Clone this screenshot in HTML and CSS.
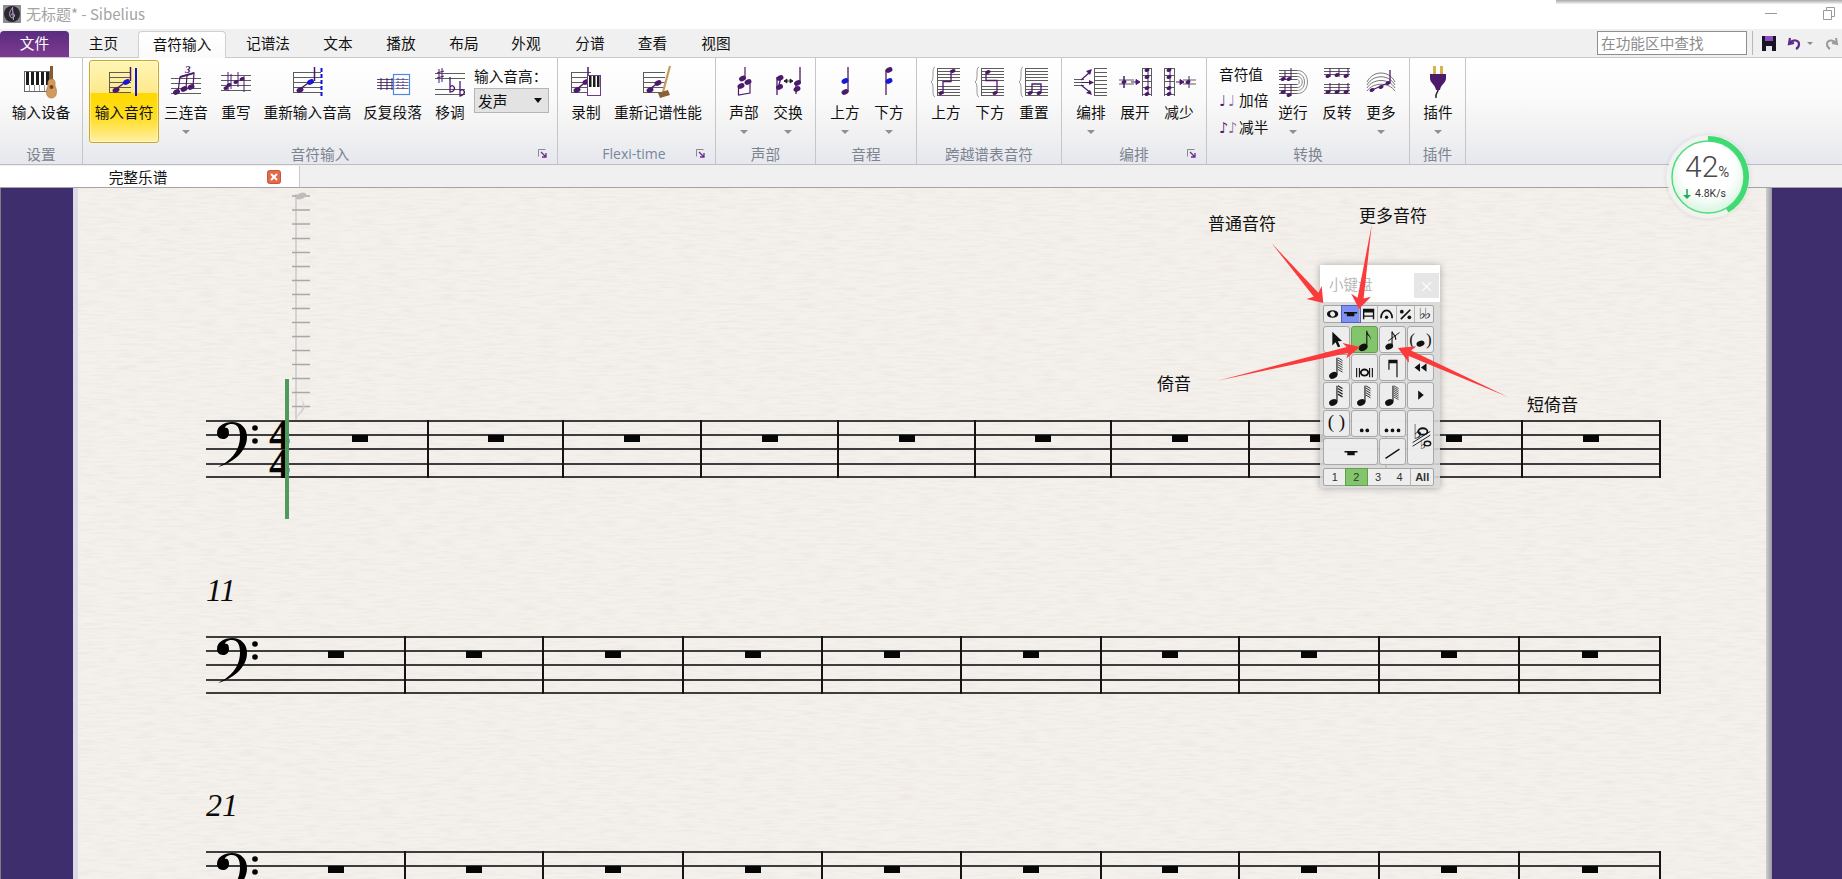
FILE: index.html
```html
<!DOCTYPE html>
<html lang="zh-CN">
<head>
    <meta charset="UTF-8">
    <title>无标题* - Sibelius</title>
    <link rel="stylesheet" href="styles.css">
</head>
<body>
<!-- shared glyphs -->
<svg class="defs" width="0" height="0">
    <defs>
        <ellipse id="h" rx="3.6" ry="2.6" transform="rotate(-25)"/>
        <ellipse id="s" rx="2.6" ry="1.8" transform="rotate(-25)"/>
        <g id="clef">
            <path d="M1 46C13 40 23 31 23 15C23 7 20 3 15 3C11 3 8 5 8 7C11 6 12 9 12 12C12 16 9 18 6 18C2 18 0 15 0 12C0 5 7 1 15 1C24 1 30 7 30 16C30 31 15 42 1 46Z"/>
            <circle cx="38" cy="7" r="2.800"/>
            <circle cx="38" cy="20" r="2.800"/>
        </g>
        <filter id="paper-grain" x="0" y="0" width="100%" height="100%">
            <feTurbulence type="fractalNoise" baseFrequency="0.05 0.45" numOctaves="2" seed="4"/>
            <feColorMatrix values="0 0 0 0 0.70  0 0 0 0 0.64  0 0 0 0 0.60  0.55 0 0 0 -0.22"/>
        </filter>
        <radialGradient id="ball" cx="50%" cy="40%" r="60%">
            <stop offset="60%" stop-color="#fff"/>
            <stop offset="100%" stop-color="#d8f5e1"/>
        </radialGradient>
    </defs>
</svg>

<div class="stage">
    <div class="titlebar">
        <div class="app-title">
            <svg class="app-icon" width="18" height="18" viewBox="0 0 18 18"><rect width="18" height="18" fill="#8d8a90"/><circle cx="9" cy="9" r="8" fill="#2b2730"/><path d="M10 2C7 6 6 8 7 11C8 14 12 13 11.500 10C11 8 8 8.500 8 10.500M9.500 3L10.500 15" fill="none" stroke="#b9a8c9" stroke-width="1"/></svg>
            <span>无标题* - Sibelius</span>
        </div>
        <div class="win-btns">
            <span class="win-min"></span>
            <svg width="12" height="13" viewBox="0 0 12 13"><path d="M.5 3.500h8v9h-8zM3.500 3.500v-3h8v9h-3" fill="none" stroke="#9a9a9a"/></svg>
        </div>
    </div>

    <div class="tabrow">
        <div class="tab tab-file">文件</div>
        <div class="tab w69">主页</div>
        <div class="tab tab-on">音符输入</div>
        <div class="tab w84">记谱法</div>
        <div class="tab w56">文本</div>
        <div class="tab w70">播放</div>
        <div class="tab w56">布局</div>
        <div class="tab w68">外观</div>
        <div class="tab w60">分谱</div>
        <div class="tab w65">查看</div>
        <div class="tab w62">视图</div>
        <div class="search">在功能区中查找</div>
        <div class="quick">
            <svg width="14" height="15" viewBox="0 0 14 15"><path d="M0 0h14v15H0z" fill="#1a1326"/><path d="M3 0h8v5H3z" fill="#8a4fc0"/><path d="M4 10h6v5H4z" fill="#e8e8e8"/></svg>
            <svg class="q-undo" width="14" height="14" viewBox="0 0 14 14"><path d="M3 2L2 8L7 7M3 7C6 3 12 4 12 8C12 10 11 12 9 13" fill="none" stroke="#5b2c8a" stroke-width="2.200"/></svg>
            <i class="q-caret"></i>
            <svg class="q-redo" width="14" height="14" viewBox="0 0 14 14"><path d="M11 2L12 8L7 7M11 7C8 3 2 4 2 8C2 10 3 12 5 13" fill="none" stroke="#9a9a9a" stroke-width="2"/></svg>
        </div>
    </div>

    <div class="ribbon">
        <!-- 设置 -->
        <section class="group g-setup">
            <div class="items">
                <div class="item w82">
                    <svg class="ico" viewBox="0 0 40 36"><rect x="3.500" y="7.500" width="25" height="20" fill="#fff" stroke="#666"/><path d="M5 8h3v13H5zM10 8h3v13h-3zM15 8h3v13h-3zM20 8h3v13h-3zM25 8h3v13h-3z" fill="#1d1d1d"/><path d="M8.500 21v6M13.500 21v6M18.500 21v6M23.500 21v6" stroke="#999"/><path d="M29 2h3v15h-3z" fill="#8a5a2b"/><path d="M30.500 15C26 15 27 20 27 22C25 25 24 34 30.500 34C37 34 36 25 34 22C34 20 35 15 30.500 15Z" fill="#d49a5c" stroke="#a56c34" stroke-width=".6"/><circle cx="30.500" cy="23" r="2" fill="#6d4520"/></svg>
                    <span>输入设备</span>
                </div>
            </div>
            <div class="glabel">设置</div>
        </section>

        <!-- 音符输入 -->
        <section class="group g-input">
            <div class="items">
                <div class="item item-on w70">
                    <svg class="ico" viewBox="0 0 40 36"><path class="sl" d="M5.500 8v20M5 8.500h22M5 13.500h22M5 18.500h22M5 23.500h22M5 28.500h22"/><path d="M12 25L23 17M26.500 3V17" stroke="#4b1a6b" stroke-width="1.500" fill="none"/><use href="#h" x="12" y="26" class="p"/><use href="#h" x="22.500" y="18" class="b"/><path d="M31 4h2v28h-2z" fill="#1313d8"/></svg>
                    <span>输入音符</span>
                </div>
                <div class="item w54">
                    <svg class="ico" viewBox="0 0 40 36"><path class="sl" d="M5 14.500h30M5 19.500h30M5 24.500h30M5 29.500h30"/><path d="M12 28L14 13L28 9L27 23M21 11L20 25" stroke="#4b1a6b" stroke-width="1.200" fill="none"/><path d="M14 12L28 8V10L14 14Z" class="p"/><use href="#h" x="10.500" y="28" class="p"/><use href="#h" x="18" y="25" class="p"/><use href="#h" x="25" y="23" class="p"/><text x="19" y="9" class="tup">3</text></svg>
                    <span>三连音</span>
                    <i class="caret"></i>
                </div>
                <div class="item w46">
                    <svg class="ico" viewBox="0 0 40 36"><path class="sl" d="M5 11.500h30M5 16.500h30M5 21.500h30M5 26.500h30"/><path d="M12 8V27M15 10V25M22 8V23M28 12V28" stroke="#4b1a6b" fill="none"/><use href="#s" x="10" y="24" class="p"/><use href="#s" x="13" y="21" class="p"/><use href="#s" x="20" y="18" class="p"/><use href="#s" x="26" y="15" class="p"/></svg>
                    <span>重写</span>
                </div>
                <div class="item w97">
                    <svg class="ico" viewBox="0 0 40 36"><path class="sl" d="M5.500 8v20M5 8.500h28M5 13.500h28M5 18.500h28M5 23.500h28M5 28.500h28"/><path d="M12 25L23 17M26.500 3V17" stroke="#4b1a6b" stroke-width="1.500" fill="none"/><use href="#h" x="12" y="26" class="p"/><use href="#h" x="22.500" y="18" class="b"/><path d="M33.500 4v28" stroke="#1313d8" stroke-width="2" stroke-dasharray="4 2"/></svg>
                    <span>重新输入音高</span>
                </div>
                <div class="item w73">
                    <svg class="ico" viewBox="0 0 40 36"><path d="M4 15.500h32M4 18.500h32M4 21.500h32M4 24.500h32" stroke="#5a4a6a" fill="none"/><path d="M8 14v12M14 14v12M19 14v12" stroke="#4b1a6b" fill="none"/><rect x="20.500" y="10.500" width="16" height="20" fill="#fff" fill-opacity=".55" stroke="#4a8bea" stroke-width="1.200"/><path d="M23 15.500h12M23 18.500h12M23 21.500h12M23 24.500h12" stroke="#7a6a8a" fill="none"/><path d="M25 14v11M30 14v11" stroke="#4040c0" stroke-dasharray="2 1"/></svg>
                    <span>反复段落</span>
                </div>
                <div class="item w42">
                    <svg class="ico" viewBox="0 0 40 36"><path class="sl" d="M5 9.500h30M5 14.500h30M5 25.500h30M5 30.500h30"/><path d="M9 5V19M12 4V18M7 9L14 7M7 14L14 12" stroke="#4b1a6b" fill="none"/><path d="M20 13V28C24 28 26 24 23 22C22 21 21 22 20 23M30 17V32C34 31 36 28 33 26C32 25 31 26 30 27" stroke="#4b1a6b" fill="none" stroke-width="1.300"/></svg>
                    <span>移调</span>
                </div>
                <div class="pitch">
                    <div class="pitch-title">输入音高：</div>
                    <div class="dropdown"><span>发声</span><i></i></div>
                </div>
            </div>
            <div class="glabel">音符输入</div>
            <svg class="launch" width="9" height="9" viewBox="0 0 9 9"><path d="M.5.500h7M.5.500v7" stroke="#8a8a8a" fill="none"/><path d="M3 3l5 5M8 4v4H4" stroke="#6a2a90" fill="none" stroke-width="1.300"/></svg>
        </section>

        <!-- Flexi-time -->
        <section class="group g-flexi">
            <div class="items">
                <div class="item w56">
                    <svg class="ico" viewBox="0 0 40 36"><path class="sl" d="M5.500 8v20M5 8.500h20M5 13.500h20M5 18.500h20M5 23.500h20M5 28.500h20"/><path d="M11 25L21 17M22 3V16" stroke="#4b1a6b" stroke-width="1.500" fill="none"/><use href="#h" x="11" y="26" class="p"/><use href="#h" x="20" y="18" class="p"/><rect x="21.500" y="11.500" width="13" height="20" fill="#fff" stroke="#6a3a90"/><path d="M23 12h2.500v11H23zM27 12h2.500v11H27zM31 12h2.500v11H31z" fill="#1d1d1d"/></svg>
                    <span>录制</span>
                </div>
                <div class="item w88">
                    <svg class="ico" viewBox="0 0 40 36"><path class="sl" d="M5.500 8v20M5 8.500h22M5 13.500h22M5 18.500h22M5 23.500h22M5 28.500h22"/><path d="M12 25L21 18" stroke="#4b1a6b" stroke-width="1.500" fill="none"/><use href="#h" x="12" y="26" class="p"/><use href="#h" x="20" y="19" class="p"/><path d="M32 2L25 28" stroke="#c89a60" stroke-width="2.200"/><path d="M20 29L30 26L32 31L22 34Z" fill="#8a6238"/></svg>
                    <span>重新记谱性能</span>
                </div>
            </div>
            <div class="glabel gl-flexi">Flexi-time</div>
            <svg class="launch" width="9" height="9" viewBox="0 0 9 9"><path d="M.5.500h7M.5.500v7" stroke="#8a8a8a" fill="none"/><path d="M3 3l5 5M8 4v4H4" stroke="#6a2a90" fill="none" stroke-width="1.300"/></svg>
        </section>

        <!-- 声部 -->
        <section class="group g-voice">
            <div class="items">
                <div class="item w44">
                    <svg class="ico" viewBox="0 0 40 36"><path d="M21 3V14M14.500 21V31L26 29V16" stroke="#4b1a6b" stroke-width="1.200" fill="none"/><use href="#h" x="18.500" y="14.500" class="p"/><use href="#h" x="24" y="18" class="p"/><use href="#h" x="17" y="22" class="p"/></svg>
                    <span>声部</span>
                    <i class="caret"></i>
                </div>
                <div class="item w44">
                    <svg class="ico" viewBox="0 0 40 36"><path d="M9 13V31M32 3V19M13 13L10 25M28 19V30" stroke="#4b1a6b" stroke-width="1.300" fill="none"/><path d="M16 17h9M16 17l3-2v4zM25 17l-3-2v4z" stroke="#222" fill="#222" stroke-width=".8"/><use href="#h" x="11.500" y="23" class="p"/><use href="#h" x="12" y="14" class="p"/><use href="#h" x="29.500" y="19" class="p"/><use href="#h" x="29" y="25" class="p"/></svg>
                    <span>交换</span>
                    <i class="caret"></i>
                </div>
            </div>
            <div class="glabel">声部</div>
        </section>

        <!-- 音程 -->
        <section class="group g-int">
            <div class="items">
                <div class="item w44">
                    <svg class="ico" viewBox="0 0 40 36"><path d="M23 3V28" stroke="#4b1a6b" stroke-width="1.300"/><use href="#h" x="20" y="17" class="b"/><use href="#h" x="20" y="28" class="p"/></svg>
                    <span>上方</span>
                    <i class="caret"></i>
                </div>
                <div class="item w44">
                    <svg class="ico" viewBox="0 0 40 36"><path d="M17 6V31" stroke="#4b1a6b" stroke-width="1.300"/><use href="#h" x="20" y="6" class="p"/><use href="#h" x="20" y="17" class="b"/></svg>
                    <span>下方</span>
                    <i class="caret"></i>
                </div>
            </div>
            <div class="glabel">音程</div>
        </section>

        <!-- 跨越谱表音符 -->
        <section class="group g-cross">
            <div class="items">
                <div class="item w44">
                    <svg class="ico" viewBox="0 0 40 36"><path class="brace" d="M9 3C5 4 9 16 5 18C9 20 5 32 9 33"/><path class="sl" d="M11 4.500h23M11 7.500h23M11 10.500h23M11 13.500h23M11 16.500h23M11 22.500h23M11 25.500h23M11 28.500h23M11 31.500h23M11.500 4v28"/><path d="M17 30V17.500H25V6" stroke="#4b1a6b" stroke-width="1.300" fill="none"/><use href="#s" x="15" y="29" class="p"/><use href="#s" x="27" y="7" class="p"/></svg>
                    <span>上方</span>
                </div>
                <div class="item w44">
                    <svg class="ico" viewBox="0 0 40 36"><path class="brace" d="M9 3C5 4 9 16 5 18C9 20 5 32 9 33"/><path class="sl" d="M11 4.500h23M11 7.500h23M11 10.500h23M11 13.500h23M11 16.500h23M11 22.500h23M11 25.500h23M11 28.500h23M11 31.500h23M11.500 4v28"/><path d="M16 8V16.500H27V29" stroke="#4b1a6b" stroke-width="1.300" fill="none"/><use href="#s" x="18" y="8" class="p"/><use href="#s" x="25" y="29" class="p"/></svg>
                    <span>下方</span>
                </div>
                <div class="item w44">
                    <svg class="ico" viewBox="0 0 40 36"><path class="brace" d="M9 3C5 4 9 16 5 18C9 20 5 32 9 33"/><path class="sl" d="M11 4.500h23M11 7.500h23M11 10.500h23M11 13.500h23M11 16.500h23M11 22.500h23M11 25.500h23M11 28.500h23M11 31.500h23M11.500 4v28"/><path d="M18 29V20H27V29" stroke="#4b1a6b" stroke-width="1.300" fill="none"/><use href="#s" x="16" y="29" class="p"/><use href="#s" x="25" y="29" class="p"/></svg>
                    <span>重置</span>
                </div>
            </div>
            <div class="glabel">跨越谱表音符</div>
        </section>

        <!-- 编排 -->
        <section class="group g-arr">
            <div class="items">
                <div class="item w44">
                    <svg class="ico" viewBox="0 0 40 36"><path class="sl" d="M3 15.500h10M3 18.500h10M3 21.500h10M23 4.500h13M23 8.500h13M23 12.500h13M23 16.500h13M23 20.500h13M23 24.500h13M23 28.500h13M23 31.500h13M23.500 4v28"/><path d="M10 16L19 8M10 18.500H21M10 21L20 29" stroke="#4b1a6b" stroke-width="1.200" fill="none"/><path d="M21 5L15 7L19 11ZM23 18.500L18 16V21ZM21 31L15 29L19 26Z" fill="#4b1a6b"/></svg>
                    <span>编排</span>
                    <i class="caret"></i>
                </div>
                <div class="item w44">
                    <svg class="ico" viewBox="0 0 40 36"><path class="sl" d="M27.500 4v28M36.500 4v28M27 4.500h10M27 11.500h10M27 17.500h10M27 23.500h10M27 30.500h10M4 16h15M4 20h15"/><path d="M9 12V24" stroke="#4b1a6b" stroke-width="1.500"/><use href="#s" x="9" y="18" class="p"/><path d="M16 18h7M25 18l-4-2.500v5z" stroke="#4b1a6b" fill="#4b1a6b"/><use href="#s" x="32" y="6" class="p"/><use href="#s" x="32" y="13" class="p"/><use href="#s" x="32" y="24" class="p"/><use href="#s" x="32" y="30" class="p"/><path d="M33 4v27" stroke="#4b1a6b"/></svg>
                    <span>展开</span>
                </div>
                <div class="item w44">
                    <svg class="ico" viewBox="0 0 40 36"><path class="sl" d="M5.500 4v28M15.500 4v28M5 4.500h11M5 11.500h11M5 17.500h11M5 23.500h11M5 30.500h11M24 16h13M24 20h13"/><use href="#s" x="10" y="6" class="p"/><use href="#s" x="10" y="13" class="p"/><use href="#s" x="10" y="24" class="p"/><use href="#s" x="10" y="30" class="p"/><path d="M11 4v27M30 12V24" stroke="#4b1a6b"/><path d="M17 18h6M25 18l-4-2.500v5z" stroke="#4b1a6b" fill="#4b1a6b"/><use href="#s" x="29" y="18" class="p"/></svg>
                    <span>减少</span>
                </div>
            </div>
            <div class="glabel">编排</div>
            <svg class="launch" width="9" height="9" viewBox="0 0 9 9"><path d="M.5.500h7M.5.500v7" stroke="#8a8a8a" fill="none"/><path d="M3 3l5 5M8 4v4H4" stroke="#6a2a90" fill="none" stroke-width="1.300"/></svg>
        </section>

        <!-- 转换 -->
        <section class="group g-trans">
            <div class="items">
                <div class="stack">
                    <div class="st-title">音符值</div>
                    <div class="st-row"><b class="n1">♩</b><b class="n2">♩</b>加倍</div>
                    <div class="st-row"><b class="n1">♪</b><b class="n2">♪</b>减半</div>
                </div>
                <div class="item w44">
                    <svg class="ico" viewBox="0 0 40 36"><path class="sl" d="M6 6.500h18M6 9.500h18M6 12.500h18M6 15.500h18M6 20.500h18M6 23.500h18M6 26.500h18M6 29.500h18"/><path d="M24 6.500C38 6 38 30 24 29.500M24 9.500C34 9 34 27 24 26.500M24 12.500C31 12 31 24 24 23.500M24 15.500C27 15 27 21 24 20.500" stroke="#888" fill="none"/><path d="M12 7V16M18 4V16M12 20V29M18 20V32" stroke="#4b1a6b" fill="none"/><use href="#s" x="10" y="15" class="p"/><use href="#s" x="16" y="15" class="p"/><use href="#s" x="10" y="28" class="p"/><use href="#s" x="16" y="31" class="p"/></svg>
                    <span>逆行</span>
                    <i class="caret"></i>
                </div>
                <div class="item w44">
                    <svg class="ico" viewBox="0 0 40 36"><path class="sl" d="M7 4.500h26M7 7.500h26M7 10.500h26M7 20.500h26M7 23.500h26M7 26.500h26M7 29.500h26"/><path d="M13 4V13M22 4V13M31 4V13M13 19V28M22 19V28M31 19V28" stroke="#4b1a6b" fill="none"/><use href="#s" x="11" y="12" class="p"/><use href="#s" x="20" y="11" class="p"/><use href="#s" x="29" y="12" class="p"/><use href="#s" x="11" y="28" class="p"/><use href="#s" x="20" y="28" class="p"/><use href="#s" x="29" y="28" class="p"/></svg>
                    <span>反转</span>
                </div>
                <div class="item w44">
                    <svg class="ico" viewBox="0 0 40 36"><path d="M6 18C12 6 28 6 34 18M6 21C12 10 28 10 34 21M6 24C12 14 28 14 34 24M6 27C12 18 28 18 34 27" stroke="#777" fill="none"/><path d="M11 26L27 19M29 6V19" stroke="#4b1a6b" stroke-width="1.300" fill="none"/><use href="#s" x="11" y="26" class="p"/><use href="#s" x="20" y="23" class="p"/><use href="#s" x="27" y="19" class="p"/></svg>
                    <span>更多</span>
                    <i class="caret"></i>
                </div>
            </div>
            <div class="glabel">转换</div>
        </section>

        <!-- 插件 -->
        <section class="group g-plug">
            <div class="items">
                <div class="item w56">
                    <svg class="ico" viewBox="0 0 40 36"><path d="M15 2h3v9h-3zM22 2h3v9h-3z" fill="#d9b24a"/><path d="M12 10H28V14C28 19 23 20 22 26H18C17 20 12 19 12 14Z" fill="#4b1a6b"/><path d="M20 26C20 29 17 29 18 34" stroke="#222" stroke-width="1.500" fill="none"/></svg>
                    <span>插件</span>
                    <i class="caret"></i>
                </div>
            </div>
            <div class="glabel">插件</div>
        </section>
    </div>

    <div class="doctabs">
        <div class="doctab">
            <span>完整乐谱</span>
            <svg width="14" height="14" viewBox="0 0 14 14"><rect x=".5" y=".5" width="13" height="13" rx="2" fill="#e4694a" stroke="#c9553a"/><path d="M4 4l6 6M10 4l-6 6" stroke="#fff" stroke-width="2"/></svg>
        </div>
    </div>

    <div class="canvas">
        <div class="paper">
            <svg class="grain" width="1688" height="691"><rect width="1688" height="691" filter="url(#paper-grain)"/></svg>

            <div class="staff sys-a">
                <svg class="clef" width="46" height="48" viewBox="0 0 46 48"><use href="#clef"/></svg>
                <div class="timesig"><span>4</span><span>4</span></div>
                <div class="bar first-a"><i class="rest"></i></div>
                <div class="bar"><i class="rest"></i></div>
                <div class="bar"><i class="rest"></i></div>
                <div class="bar"><i class="rest"></i></div>
                <div class="bar"><i class="rest"></i></div>
                <div class="bar"><i class="rest"></i></div>
                <div class="bar"><i class="rest"></i></div>
                <div class="bar"><i class="rest"></i></div>
                <div class="bar"><i class="rest"></i></div>
                <div class="bar"><i class="rest"></i></div>
            </div>

            <div class="barnum">11</div>
            <div class="staff sys-b">
                <svg class="clef" width="46" height="48" viewBox="0 0 46 48"><use href="#clef"/></svg>
                <div class="bar first-b"><i class="rest"></i></div>
                <div class="bar"><i class="rest"></i></div>
                <div class="bar"><i class="rest"></i></div>
                <div class="bar"><i class="rest"></i></div>
                <div class="bar"><i class="rest"></i></div>
                <div class="bar"><i class="rest"></i></div>
                <div class="bar"><i class="rest"></i></div>
                <div class="bar"><i class="rest"></i></div>
                <div class="bar"><i class="rest"></i></div>
                <div class="bar"><i class="rest"></i></div>
            </div>

            <div class="barnum num-last">21</div>
            <div class="staff sys-b">
                <svg class="clef" width="46" height="48" viewBox="0 0 46 48"><use href="#clef"/></svg>
                <div class="bar first-b"><i class="rest"></i></div>
                <div class="bar"><i class="rest"></i></div>
                <div class="bar"><i class="rest"></i></div>
                <div class="bar"><i class="rest"></i></div>
                <div class="bar"><i class="rest"></i></div>
                <div class="bar"><i class="rest"></i></div>
                <div class="bar"><i class="rest"></i></div>
                <div class="bar"><i class="rest"></i></div>
                <div class="bar"><i class="rest"></i></div>
                <div class="bar"><i class="rest"></i></div>
            </div>
        </div>
        <div class="paper-edge"></div>
    </div>

    <!-- caret and pitch ruler on the first staff -->
    <div class="ins-caret"></div>
    <svg class="ruler" width="24" height="234" viewBox="0 0 24 234">
        <path d="M6 4V230" stroke="#c4c4c4" stroke-width="1.300"/>
        <path d="M2 6h18M2 20h18M2 34h18M2 48.500h18M2 62.500h18M2 76.500h18M2 90.500h18M2 104.500h18M2 118.500h18M2 132.500h18M2 146.500h18M2 160.500h18M2 174.500h18M2 188.500h18M2 202.500h18M2 216.500h18" stroke="#a8a8a8" stroke-width="1.300"/>
        <ellipse cx="11" cy="6" rx="5.500" ry="3" fill="#bdbdbd" transform="rotate(-20 11 6)"/>
        <path d="M6 229C8 222 14 220 13 214C12 211 12 210 11 209C15 213 17 219 10 224Z" fill="#d0d0d0"/>
    </svg>

    <!-- 小键盘 -->
    <div class="keypad">
        <div class="kp-title"><span>小键盘</span><b>×</b></div>
        <div class="kp-tabs">
            <div class="kc"><svg viewBox="0 0 18 17"><ellipse cx="9" cy="8.500" rx="6" ry="4"/><ellipse cx="9" cy="8.500" rx="2.500" ry="2.800" fill="#eee" transform="rotate(-30 9 8.500)"/></svg></div>
            <div class="kc kc-blue"><svg viewBox="0 0 18 17"><path d="M2 6.500h14v1.500H2zM5 8h8v3H5z"/></svg></div>
            <div class="kc"><svg viewBox="0 0 18 17"><path d="M3 3h12v4H3zM3 10h12v1.500H3zM3 3h1.500v11H3zM13.500 3H15v11h-1.500z"/></svg></div>
            <div class="kc"><svg viewBox="0 0 18 17"><path d="M3 13C3 2 15 2 15 13" fill="none" stroke="#111" stroke-width="1.800"/><circle cx="9" cy="12" r="1.800"/></svg></div>
            <div class="kc"><svg viewBox="0 0 18 17"><path d="M4 14L14 4" stroke="#111" stroke-width="1.800"/><circle cx="5" cy="6" r="2"/><circle cx="13" cy="12" r="2"/></svg></div>
            <div class="kc kc-flat">♭♭</div>
        </div>
        <div class="kp-grid">
            <div class="kb"><svg viewBox="0 0 27 27"><path d="M9 5L9 20L12.500 16.500L15 22L17.500 21L15 15.500L19.500 15Z"/></svg></div>
            <div class="kb kb-on"><svg viewBox="0 0 27 27"><use href="#h" transform="translate(12 22) scale(1.400)"/><path d="M16 4V21" stroke="#111" stroke-width="1.200"/><path d="M16 4C16.500 8 21.500 9 20 15C20.500 11 18 9 16 8Z"/></svg></div>
            <div class="kb"><svg viewBox="0 0 27 27"><use href="#h" transform="translate(10 21) scale(1.200)"/><path d="M13 5V20" stroke="#111" stroke-width="1.200"/><path d="M13 5C14 9 18 9 17 14" fill="none" stroke="#111" stroke-width="1.200"/><path d="M9 15L21 6" stroke="#111"/></svg></div>
            <div class="kb kb-paren"><span>(</span><svg viewBox="0 0 12 27"><ellipse cx="6" cy="18" rx="4.500" ry="3" transform="rotate(-20 6 18)"/></svg><span>)</span></div>

            <div class="kb"><svg viewBox="0 0 27 27"><use href="#h" transform="translate(10 22) scale(1.300)"/><path d="M14 3V21" stroke="#111" stroke-width="1.200"/><path d="M15 3l5 3M15 5.500l5 3M15 8l5 3M15 10.500l5 3M15 13l5 3M15 15.500l5 3" stroke="#333"/></svg></div>
            <div class="kb"><svg viewBox="0 0 27 27"><path d="M5 14v10M8 14v10M19 14v10M22 14v10" stroke="#111" stroke-width="1.200"/><ellipse cx="13.500" cy="19" rx="4" ry="3.300" fill="none" stroke="#111" stroke-width="2"/></svg></div>
            <div class="kb"><svg viewBox="0 0 27 27"><path d="M9 5h10v4H9zM9 5h1.300v11H9zM17.700 5H19v19h-1.300z"/></svg></div>
            <div class="kb"><svg viewBox="0 0 27 27"><path d="M13 9v9l-6-4.500zM20 9v9l-6-4.500z"/></svg></div>

            <div class="kb"><svg viewBox="0 0 27 27"><use href="#h" transform="translate(10 21) scale(1.300)"/><path d="M14 3V20" stroke="#111" stroke-width="1.200"/><path d="M15 3l5 3M15 6l5 3M15 9l5 3M15 12l5 3" stroke="#222" stroke-width="1.300"/></svg></div>
            <div class="kb"><svg viewBox="0 0 27 27"><use href="#h" transform="translate(10 21) scale(1.300)"/><path d="M14 3V20" stroke="#111" stroke-width="1.200"/><path d="M15 3l5 3M15 5.500l5 3M15 8l5 3M15 10.500l5 3M15 13l5 3" stroke="#222"/></svg></div>
            <div class="kb"><svg viewBox="0 0 27 27"><use href="#h" transform="translate(10 21) scale(1.300)"/><path d="M14 3V20" stroke="#111" stroke-width="1.200"/><path d="M15 3l5 3M15 5l5 3M15 7l5 3M15 9l5 3M15 11l5 3M15 13l5 3M15 15l5 3" stroke="#333" stroke-width=".9"/></svg></div>
            <div class="kb"><svg viewBox="0 0 27 27"><path d="M11 8v10l6-5z"/></svg></div>

            <div class="kb kb-txt">( )</div>
            <div class="kb"><svg viewBox="0 0 27 27"><circle cx="10.500" cy="21" r="2"/><circle cx="16.500" cy="21" r="2"/></svg></div>
            <div class="kb"><svg viewBox="0 0 27 27"><circle cx="7" cy="21" r="2"/><circle cx="13.500" cy="21" r="2"/><circle cx="20" cy="21" r="2"/></svg></div>
            <div class="kb kb-tall"><svg viewBox="0 0 27 55"><text x="5" y="29" class="kb-flat">♭</text><ellipse cx="16" cy="21" rx="5" ry="3.500" fill="none" stroke="#111" stroke-width="2"/><text x="13" y="40" class="kb-flat sm">♭</text><ellipse cx="21" cy="34" rx="3.500" ry="2.500" fill="none" stroke="#111" stroke-width="1.500"/><path d="M5 33L24 21M5 37L24 25" stroke="#111"/></svg></div>

            <div class="kb kb-wide"><svg viewBox="0 0 54 27"><path d="M20 13h14v1.500H20zM23 14.500h8v3h-8z"/></svg></div>
            <div class="kb"><svg viewBox="0 0 27 27"><path d="M6 21L21 11" stroke="#111" stroke-width="1.500"/></svg></div>
        </div>
        <div class="kp-nums">
            <div class="kn">1</div>
            <div class="kn kn-on">2</div>
            <div class="kn">3</div>
            <div class="kn">4</div>
            <div class="kn kn-all">All</div>
        </div>
    </div>

    <!-- 标注 -->
    <svg class="arrows" width="1842" height="879" viewBox="0 0 1842 879">
        <polygon points="1271.7,243.3 1318.4,292.7 1321.7,285.9 1323.3,303 1306.5,298.9 1313.8,296.7"/>
        <polygon points="1371.7,225 1363.6,298.5 1371,296.7 1359,309 1351.2,293.7 1357.6,297.7"/>
        <polygon points="1217.7,380.7 1348.1,352.9 1346.3,358.5 1360,347 1342.6,342.9 1346.700,347.100"/>
        <polygon points="1508,397 1411.100,350.600 1416.300,346.300 1398,348 1408.900,362.700 1408.700,356"/>
    </svg>
    <div class="note-label l-normal">普通音符</div>
    <div class="note-label l-more">更多音符</div>
    <div class="note-label l-grace">倚音</div>
    <div class="note-label l-short">短倚音</div>

    <!-- 网速球 -->
    <div class="speed">
        <svg width="84" height="84" viewBox="0 0 84 84">
            <circle cx="42" cy="42" r="41" fill="#f1f3f1"/>
            <circle cx="42" cy="42" r="36" fill="url(#ball)" stroke="#4fdc7c" stroke-width="1.500"/>
            <path d="M42 3.500A38.500 38.500 0 0 1 61.200 75.400" fill="none" stroke="#3fdb72" stroke-width="5"/>
        </svg>
        <div class="speed-pct">42<small>%</small></div>
        <div class="speed-rate"><svg width="8" height="10" viewBox="0 0 8 10"><path d="M3.200 0h1.600v6H8L4 10 0 6h3.200z" fill="#27a85a"/></svg>4.8K/s</div>
    </div>

    <div class="other-shadow"></div>
</div>
</body>
</html>
```

FILE: styles.css
```css
* {
    box-sizing: border-box;
}
html, body {
    margin: 0;
    padding: 0;
    overflow: hidden;
    background: #fff;
}
body {
    font-family: "Noto Sans CJK SC", "Noto Sans", sans-serif;
    font-size: 14.67px;
    color: #111;
}
.defs {
    position: absolute;
}
.stage {
    position: relative;
    width: 1842px;
    height: 879px;
    overflow: hidden;
}

/* title bar */
.titlebar {
    height: 29px;
    background: #fff;
    display: flex;
    justify-content: space-between;
    align-items: center;
    padding: 0 7px 2px 3px;
}
.app-title {
    display: flex;
    align-items: center;
    gap: 5px;
    color: #a3a3a3;
    font-size: 15px;
    line-height: 20px;
}
.win-btns {
    display: flex;
    align-items: center;
    gap: 46px;
}
.win-min {
    width: 12px;
    height: 1px;
    background: #9a9a9a;
}
.other-shadow {
    position: absolute;
    left: 1556px;
    right: 0;
    top: 0;
    height: 4px;
    background: linear-gradient(#a9a9a9, #f4f4f4);
}

/* tabs */
.tabrow {
    height: 28px;
    background: #f0f0f0;
    display: flex;
    align-items: flex-end;
    position: relative;
}
.tab {
    height: 26px;
    line-height: 24px;
    text-align: center;
    flex: none;
}
.tab-file {
    width: 69px;
    color: #fff;
    background: linear-gradient(#5a2c80, #7d3b90);
    border-radius: 4px 4px 0 0;
}
.tab-on {
    width: 88px;
    height: 27px;
    margin-bottom: -1px;
    background: linear-gradient(#fff, #fafafa);
    border: 1px solid #cfcfcf;
    border-bottom: none;
    border-radius: 4px 4px 0 0;
    z-index: 1;
}
.w56 { width: 56px; }
.w60 { width: 60px; }
.w62 { width: 62px; }
.w65 { width: 65px; }
.w68 { width: 68px; }
.w69 { width: 69px; }
.w70 { width: 70px; }
.w84 { width: 84px; }
.search {
    position: absolute;
    left: 1597px;
    top: 2px;
    width: 150px;
    height: 24px;
    border: 1px solid #8f8f8f;
    background: #fff;
    color: #8b8b8b;
    line-height: 21px;
    padding-left: 3px;
}
.quick {
    position: absolute;
    left: 1752px;
    top: 2px;
    height: 24px;
    width: 90px;
    display: flex;
    align-items: center;
    padding-left: 9px;
    border-left: 1px solid #b8b8b8;
    background-clip: padding-box;
}
.q-undo {
    margin-left: 11px;
}
.q-caret {
    width: 0;
    height: 0;
    margin-left: 6px;
    border: 3px solid transparent;
    border-top: 3px solid #8a8a8a;
    border-bottom: none;
}
.q-redo {
    margin-left: 12px;
}

/* ribbon */
.ribbon {
    height: 108px;
    display: flex;
    border-top: 1px solid #c9c9c9;
    border-bottom: 1px solid #bdbdbd;
    background: linear-gradient(#fff 0, #fbfbfb 35%, #f1f1f2 70%, #e6e8ee 100%);
}
.group {
    position: relative;
    flex: none;
    display: flex;
    flex-direction: column;
    border-right: 1px solid #c4c6c9;
}
.g-setup { width: 83px; }
.g-input { width: 475px; }
.g-flexi { width: 158px; }
.g-voice { width: 100px; }
.g-int { width: 101px; }
.g-cross { width: 145px; }
.g-arr { width: 145px; }
.g-trans { width: 203px; }
.g-plug { width: 56px; }
.items {
    height: 84px;
    display: flex;
}
.g-input .items { padding-left: 6px; }
.g-voice .items { padding-left: 6px; }
.g-int .items { padding-left: 7px; }
.g-cross .items { padding-left: 7px; }
.g-arr .items { padding-left: 7px; }
.g-trans .items { padding-left: 6px; }
.glabel {
    text-align: center;
    color: #7c8490;
    line-height: 21px;
    padding-top: 1px;
}
.gl-flexi {
    font-family: "Open Sans", sans-serif;
    font-size: 14px;
    padding-right: 5px;
    color: #76869c;
}
.launch {
    position: absolute;
    right: 10px;
    bottom: 6px;
}
.item {
    flex: none;
    display: flex;
    flex-direction: column;
    align-items: center;
    padding-top: 6px;
    line-height: 20px;
    white-space: nowrap;
}
.w42 { width: 42px; }
.w44 { width: 44px; }
.w46 { width: 46px; }
.w54 { width: 54px; }
.w73 { width: 73px; }
.w82 { width: 82px; }
.w88 { width: 88px; }
.w97 { width: 97px; }
.item-on {
    height: 83px;
    margin-top: 2px;
    padding-top: 3px;
    border: 1px solid #c9a92c;
    border-radius: 3px;
    background: linear-gradient(#fff5b5 0, #fde98c 39%, #ffd900 40%, #ffdd24 70%, #fff0a6 100%);
    box-shadow: inset 0 0 0 1px rgba(255, 255, 255, .4);
}
.ico {
    width: 40px;
    height: 36px;
    flex: none;
    margin-bottom: 2px;
    overflow: visible;
}
.sl {
    stroke: #5c5c5c;
    stroke-width: 1;
    fill: none;
}
.brace {
    stroke: #999;
    fill: none;
}
.p { fill: #4b1a6b; }
.b { fill: #1717d8; }
.tup {
    font-family: "Liberation Serif", serif;
    font-style: italic;
    font-weight: bold;
    font-size: 11px;
    fill: #4b1a6b;
}
.caret {
    width: 0;
    height: 0;
    margin-top: 8px;
    border-left: 4px solid transparent;
    border-right: 4px solid transparent;
    border-top: 4px solid #8f8f8f;
}
.pitch {
    margin-left: 3px;
    width: 75px;
    padding-top: 8px;
}
.pitch-title {
    line-height: 20px;
    margin-bottom: 2px;
    white-space: nowrap;
}
.dropdown {
    height: 25px;
    border: 1px solid #b5b5b5;
    background: #e3e3e3;
    display: flex;
    align-items: center;
    justify-content: space-between;
    padding: 0 6px 0 3px;
}
.dropdown i {
    width: 0;
    height: 0;
    border-left: 4px solid transparent;
    border-right: 4px solid transparent;
    border-top: 5px solid #111;
}
.stack {
    width: 58px;
    padding: 6px 0 0 6px;
    flex: none;
}
.st-title {
    line-height: 20px;
    margin-bottom: 6px;
}
.st-row {
    height: 20px;
    line-height: 20px;
    margin-bottom: 7px;
    white-space: nowrap;
}
.st-row b {
    font-family: "DejaVu Sans", sans-serif;
    font-weight: normal;
    font-size: 15px;
    line-height: 18px;
    display: inline-block;
    width: 9px;
}
.n1 { color: #4b1a6b; }
.n2 { color: #8d6ea6; margin-right: 2px; }

/* doc tabs */
.doctabs {
    height: 23px;
    background: #f0f0f0;
    border-bottom: 1px solid #a3a3a8;
    padding-top: 1px;
}
.doctab {
    width: 300px;
    height: 21px;
    background: #fff;
    border-right: 1px solid #c9c9c9;
    display: flex;
    align-items: center;
    line-height: 20px;
}
.doctab span {
    width: 267px;
    padding-left: 9px;
    text-align: center;
}

/* score */
.canvas {
    height: 692px;
    background: #3f2e6e;
    padding: 0 70px 0 72px;
    border-left: 1px solid #7d7b84;
    display: flex;
}
.paper {
    position: relative;
    width: 1693px;
    height: 100%;
    overflow: hidden;
    background: #f4f0ec;
    border-left: 5px solid #dcdae4;
    padding: 232px 0 0 128px;
}
.paper-edge {
    width: 6px;
    background: linear-gradient(90deg, #cfcfd2, #9a9aa0);
}
.grain {
    position: absolute;
    left: 0;
    top: 0;
}
.staff {
    position: relative;
    width: 1455px;
    height: 58px;
    display: grid;
    background-image:
        linear-gradient(#3d3d3d, #3d3d3d),
        linear-gradient(#3d3d3d, #3d3d3d),
        linear-gradient(#3d3d3d, #3d3d3d),
        linear-gradient(#3d3d3d, #3d3d3d),
        linear-gradient(#3d3d3d, #3d3d3d);
    background-size: 100% 2px;
    background-repeat: no-repeat;
    background-position: 0 0, 0 14px, 0 28px, 0 43px, 0 56px;
}
.sys-a {
    grid-template-columns: 223px 135px 138px 137px 137px 136px 138px 137px 136px 138px;
}
.sys-b {
    grid-template-columns: 200px 138px 140px 139px 139px 140px 138px 140px 140px 141px;
}
.bar {
    display: flex;
    justify-content: center;
    border-right: 2px solid #141414;
}
.first-a { padding-left: 87px; }
.first-b { padding-left: 61px; }
.rest {
    width: 16px;
    height: 7px;
    margin-top: 15px;
    background: #060606;
}
.clef {
    position: absolute;
    left: 11px;
    top: 1px;
}
.timesig {
    position: absolute;
    left: 63px;
    top: 1px;
    font-family: "Liberation Serif", serif;
    font-weight: bold;
    font-size: 42px;
    line-height: 29px;
    color: #050505;
}
.timesig span {
    display: block;
    width: 22px;
    height: 29px;
}
.barnum {
    position: relative;
    font-family: "Liberation Serif", serif;
    font-style: italic;
    font-size: 32px;
    line-height: 34px;
    margin: 95px 0 29px 0;
    color: #0a0a0a;
}
.num-last {
    margin-top: 94px;
}
.ins-caret {
    position: absolute;
    left: 285px;
    top: 379px;
    width: 4px;
    height: 140px;
    background: #4f9a5b;
}
.ruler {
    position: absolute;
    left: 290px;
    top: 190px;
}

/* keypad */
.keypad {
    position: absolute;
    left: 1320px;
    top: 265px;
    width: 120px;
    height: 223px;
    background: rgba(216, 216, 216, .9);
    box-shadow: 0 0 7px rgba(0, 0, 0, .3);
}
.kp-title {
    height: 37px;
    background: #fff;
    position: relative;
    color: #b9b9b9;
    font-size: 14.500px;
    line-height: 38px;
    padding-left: 9px;
}
.kp-title b {
    position: absolute;
    left: 94px;
    top: 8px;
    width: 25px;
    height: 25px;
    background: #e6e6e6;
    color: #fff;
    font-weight: normal;
    line-height: 25px;
    text-align: center;
}
.kp-tabs {
    display: grid;
    grid-template-columns: repeat(6, 1fr);
    width: 111px;
    height: 18px;
    margin: 3px 0 3px 3px;
    background: rgba(240, 240, 240, .92);
    border: 1px solid #a5a5a5;
    border-radius: 2px;
}
.kc {
    border-right: 1px solid #b5b5b5;
    display: flex;
    align-items: center;
    justify-content: center;
    overflow: hidden;
}
.kc:last-child { border-right: none; }
.kc svg {
    width: 18px;
    height: 16px;
    fill: #111;
}
.kc-blue {
    background: #7e90f2;
    outline: 1px solid #4f5fc2;
}
.kc-flat {
    font-family: "DejaVu Sans", sans-serif;
    font-size: 15px;
    font-weight: bold;
    letter-spacing: -2px;
    line-height: 16px;
}
.kp-grid {
    display: grid;
    grid-template-columns: repeat(4, 27px);
    grid-template-rows: repeat(5, 27px);
    gap: 1px;
    margin-left: 3px;
}
.kb {
    background: rgba(238, 238, 238, .9);
    border: 1px solid #a8a8a8;
    border-radius: 3px;
    display: flex;
    align-items: center;
    justify-content: center;
    overflow: hidden;
}
.kb svg {
    width: 25px;
    height: 25px;
    fill: #111;
    flex: none;
}
.kb-on {
    background: #83c56c;
    border-color: #5f9e4a;
}
.kb-paren {
    font-family: "Liberation Serif", serif;
    font-size: 17px;
    line-height: 20px;
}
.kb-paren svg {
    width: 11px;
}
.kb-txt {
    font-family: "Liberation Serif", serif;
    font-size: 19px;
    padding-bottom: 3px;
}
.kb-tall {
    grid-row: 4 / span 2;
    grid-column: 4;
}
.kb-tall svg {
    height: 53px;
}
.kb-wide {
    grid-column: 1 / span 2;
}
.kb-wide svg {
    width: 52px;
}
.kb-flat {
    font-family: "DejaVu Sans", sans-serif;
    font-size: 22px;
    fill: #111;
}
.kb-flat.sm {
    font-size: 14px;
}
.kp-nums {
    display: flex;
    width: 111px;
    height: 18px;
    margin: 3px 0 0 3px;
    background: rgba(240, 240, 240, .92);
    border: 1px solid #a5a5a5;
    border-radius: 2px;
}
.kn {
    flex: 1;
    text-align: center;
    font-family: "Liberation Sans", sans-serif;
    font-size: 11px;
    line-height: 16px;
    color: #333;
}
.kn-on {
    background: #83c56c;
    outline: 1px solid #5f9e4a;
}
.kn-all {
    border-left: 1px solid #b5b5b5;
    font-weight: bold;
}

/* annotations */
.arrows {
    position: absolute;
    left: 0;
    top: 0;
    fill: #fb3b3b;
    pointer-events: none;
}
.note-label {
    position: absolute;
    font-size: 17px;
    line-height: 22px;
    color: #111;
    white-space: nowrap;
}
.l-normal { left: 1208px; top: 212px; }
.l-more { left: 1359px; top: 204px; }
.l-grace { left: 1157px; top: 372px; }
.l-short { left: 1527px; top: 393px; }

/* speed ball */
.speed {
    position: absolute;
    left: 1666px;
    top: 135px;
    width: 84px;
    height: 84px;
    border-radius: 50%;
    box-shadow: 0 0 4px rgba(0, 0, 0, .1);
    font-family: Roboto, sans-serif;
}
.speed svg {
    display: block;
}
.speed-pct {
    position: absolute;
    left: 19px;
    top: 16px;
    font-weight: 300;
    font-size: 30px;
    line-height: 32px;
    color: #4a4a4a;
    white-space: nowrap;
}
.speed-pct small {
    font-size: 15px;
    font-weight: 400;
}
.speed-rate {
    position: absolute;
    left: 17px;
    top: 52px;
    display: flex;
    align-items: center;
    gap: 4px;
    font-size: 10.500px;
    line-height: 14px;
    color: #333;
    white-space: nowrap;
}
```
